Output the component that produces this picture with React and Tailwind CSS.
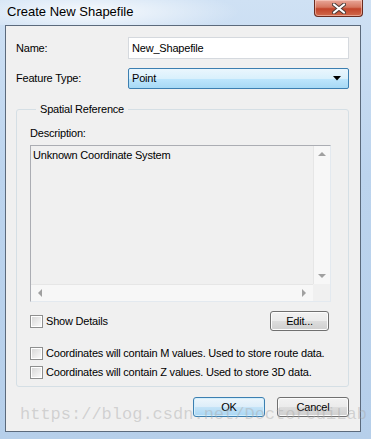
import React from "react";

const ui = { fontFamily: '"Liberation Sans", Arial, sans-serif' };

// === SMALL PIECES ===
function Checkbox({ label }) {
  return (
    <label className="flex items-center gap-[3px] whitespace-nowrap h-[13px]">
      <span className="w-[13px] h-[13px] border border-[#8e8f8f] bg-white p-px shrink-0">
        <span className="block w-full h-full bg-[linear-gradient(135deg,#d9d9d9,#f9f9f9)]"></span>
      </span>
      {label}
    </label>
  );
}

function Button({ children, primary, className = "" }) {
  return (
    <button
      className={
        "h-[20px] rounded-[3px] border text-[11px] text-black leading-none tracking-[-0.2px] " +
        (primary
          ? "border-[#3c7fb1] bg-[linear-gradient(#edf6fc_0%,#dcedf9_50%,#c4e3f7_51%,#a9d6f4_100%)] shadow-[inset_0_0_0_1px_#d4effc] "
          : "border-[#707070] bg-[linear-gradient(#f2f2f2_0%,#ebebeb_50%,#dddddd_51%,#cfcfcf_100%)] shadow-[inset_0_0_0_1px_#fcfcfc] ") +
        className
      }
    >
      {children}
    </button>
  );
}

function Tri({ dir }) {
  const pts = {
    up: "0,5 4,1 8,5",
    down: "0,1 4,5 8,1",
    left: "5,0 1,4 5,8",
    right: "1,0 5,4 1,8",
  }[dir];
  const horiz = dir === "left" || dir === "right";
  return (
    <svg width={horiz ? 6 : 8} height={horiz ? 8 : 6} viewBox={horiz ? "0 0 6 8" : "0 0 8 6"}>
      <polygon points={pts} fill="#a0a0a0" />
    </svg>
  );
}

export default function App() {
  return (
    <div
      className="relative w-[371px] h-[439px] overflow-hidden bg-[linear-gradient(180deg,#cfe1f4_0%,#bcd4ee_40%,#b6cfea_100%)] pt-[25px] pl-[5px] pr-[10px] pb-[7px] flex flex-col"
      style={ui}
    >
      {/* title bar */}
      <div className="absolute left-0 top-0 w-[371px] h-[25px] bg-[radial-gradient(ellipse_150px_24px_at_90px_12px,rgba(255,255,255,0.85),rgba(255,255,255,0))]"></div>
      <div className="absolute left-[7px] top-[4px] text-[13px] text-black leading-[16px]">
        Create New Shapefile
      </div>
      <div className="absolute left-[314px] top-0 w-[49px] h-[17px] rounded-b-[4px] border border-t-0 border-[#6a2b1f] bg-[linear-gradient(#e9a799_0%,#d5765f_45%,#c2442a_55%,#d06a4c_100%)] shadow-[inset_0_0_0_1px_rgba(255,220,210,0.5)] flex items-center justify-center">
        <svg width="14" height="11" viewBox="0 0 14 11">
          <path d="M2 1.5 L12 9.5 M12 1.5 L2 9.5" stroke="#4a3a36" strokeWidth="4" strokeLinecap="round" />
          <path d="M2 1.5 L12 9.5 M12 1.5 L2 9.5" stroke="#ffffff" strokeWidth="2.2" strokeLinecap="round" />
        </svg>
      </div>

      {/* client area */}
      <div className="relative flex-1 border border-[#5b6a7c] bg-[#f0f0f0] pl-[10px] pr-[11px] pt-[11px] text-[11px] leading-[13px] tracking-[-0.2px] text-black">
        <div className="flex items-center h-[22px]">
          <span className="w-[112px]">Name:</span>
          <div className="w-[221px] h-[22px] border border-[#d5d9de] bg-white flex items-center px-[3px]">
            New_Shapefile
          </div>
        </div>

        <div className="flex items-center h-[21px] mt-[9px]">
          <span className="w-[112px]">Feature Type:</span>
          <div className="w-[221px] h-[21px] rounded-[2px] border border-[#3c7fb1] bg-[linear-gradient(#eaf6fd_0%,#d9f0fc_50%,#bee6fd_51%,#a7d9f5_100%)] flex items-center justify-between pl-[3px] pr-[7px]">
            <span>Point</span>
            <svg width="8" height="5" viewBox="0 0 8 5">
              <polygon points="0,0 8,0 4,4.5" fill="#000" />
            </svg>
          </div>
        </div>

        <fieldset className="mt-[14px] w-[333px] h-[284px] border border-[#d5dfe5] rounded-[3px] pl-[13px] pr-[4px]">
          <legend className="ml-[6px] px-[4px]">Spatial Reference</legend>
          <div className="mt-[11px]">Description:</div>

          <div className="mt-[5px] w-[301px] h-[157px] border border-[#abadb3] border-r-[#e3e9ef] border-b-[#e3e9ef] bg-[#f0f0f0] flex flex-col">
            <div className="flex flex-1">
              <div className="flex-1 pl-[2px] pt-[3px]">Unknown Coordinate System</div>
              <div className="w-[17px] bg-[#f7f7f7] border-l border-[#e6e6e6] flex flex-col items-center justify-between py-[5px]">
                <Tri dir="up" />
                <Tri dir="down" />
              </div>
            </div>
            <div className="flex h-[17px]">
              <div className="flex-1 bg-[#f7f7f7] border-t border-[#e6e6e6] flex items-center justify-between px-[6px]">
                <Tri dir="left" />
                <Tri dir="right" />
              </div>
              <div className="w-[17px] bg-[#f0f0f0]"></div>
            </div>
          </div>

          <div className="flex items-center justify-between mt-[9px] h-[20px] w-[299px]">
            <Checkbox label="Show Details" />
            <Button className="w-[59px]">Edit...</Button>
          </div>

          <div className="mt-[16px] flex flex-col gap-[6px]">
            <Checkbox label="Coordinates will contain M values. Used to store route data." />
            <Checkbox label="Coordinates will contain Z values. Used to store 3D data." />
          </div>
        </fieldset>

        <div className="flex justify-end gap-[12px] mt-[10px]">
          <Button primary className="w-[72px]">OK</Button>
          <Button className="w-[72px]">Cancel</Button>
        </div>
      </div>

      {/* watermark */}
      <div
        className="absolute left-[20px] top-[404px] text-[17px] leading-[22px] text-[rgba(170,170,170,0.45)] whitespace-nowrap pointer-events-none"
        style={{ fontFamily: '"Liberation Mono", "Courier New", monospace' }}
      >
        https://blog.csdn.net/DoctorCuiLab
      </div>
    </div>
  );
}
